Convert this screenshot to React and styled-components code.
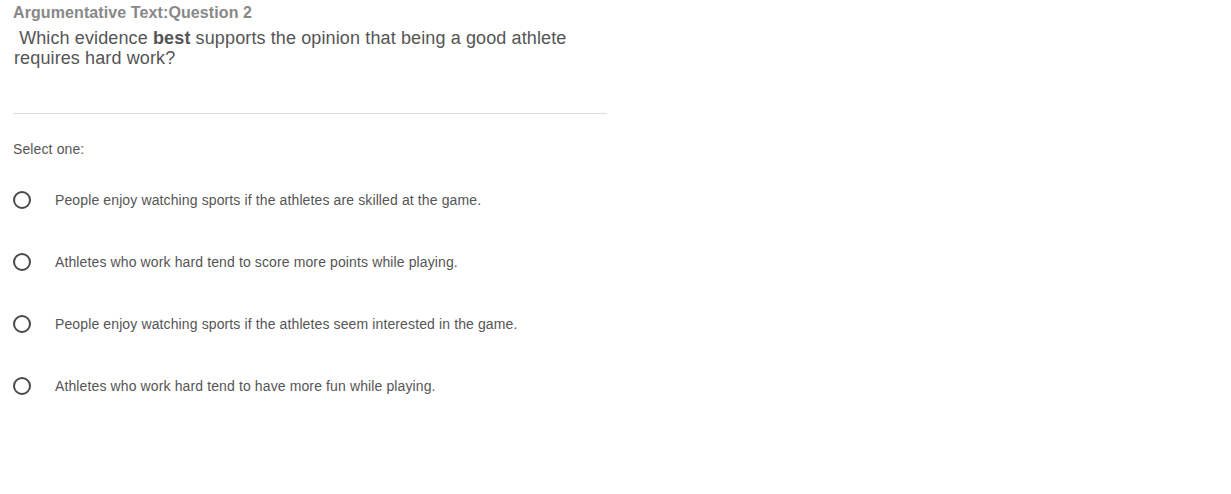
import React from "react";
import styled, { createGlobalStyle } from "styled-components";

const GlobalStyle = createGlobalStyle`
  body {
    margin: 0;
    background: #fff;
    font-family: "Liberation Sans", Arial, sans-serif;
  }
`;

const Page = styled.div`
  padding: 3px 13px 0;
  width: 594px;
`;

const Title = styled.h3`
  margin: 0;
  font-size: 16px;
  line-height: 19px;
  font-weight: 700;
  color: #888;
  letter-spacing: 0.1px;
`;

const Prompt = styled.div`
  margin-top: 6px;
  padding-left: 1px;
  font-size: 18px;
  line-height: 20px;
  letter-spacing: 0.12px;
  color: #555;
  white-space: pre-wrap;
`;

const Rule = styled.hr`
  margin: 45px 0 0;
  border: 0;
  border-top: 1px solid #ddd;
`;

const Label = styled.div`
  margin-top: 27px;
  font-size: 14px;
  line-height: 16px;
  letter-spacing: 0.12px;
  color: #555;
`;

const Options = styled.div`
  margin-top: 34px;
  display: flex;
  flex-direction: column;
  gap: 44px;
`;

const Option = styled.label`
  display: flex;
  align-items: center;
  height: 18px;
  font-size: 14px;
  letter-spacing: 0.12px;
  color: #555;
  cursor: pointer;
`;

const Radio = styled.span`
  box-sizing: border-box;
  width: 18px;
  height: 18px;
  border: 2px solid #4a4a4a;
  border-radius: 50%;
  flex: none;
`;

const OptionText = styled.span`
  margin-left: 24px;
`;

const choices = [
  "People enjoy watching sports if the athletes are skilled at the game.",
  "Athletes who work hard tend to score more points while playing.",
  "People enjoy watching sports if the athletes seem interested in the game.",
  "Athletes who work hard tend to have more fun while playing.",
];

export default function App() {
  return (
    <>
      <GlobalStyle />
      <Page>
        <Title>Argumentative Text:Question 2</Title>
        <Prompt>
          {" Which evidence "}
          <b>best</b>
          {" supports the opinion that being a good athlete requires hard work?"}
        </Prompt>
        <Rule />
        <Label>Select one:</Label>
        <Options>
          {choices.map((c) => (
            <Option key={c}>
              <Radio />
              <OptionText>{c}</OptionText>
            </Option>
          ))}
        </Options>
      </Page>
    </>
  );
}
